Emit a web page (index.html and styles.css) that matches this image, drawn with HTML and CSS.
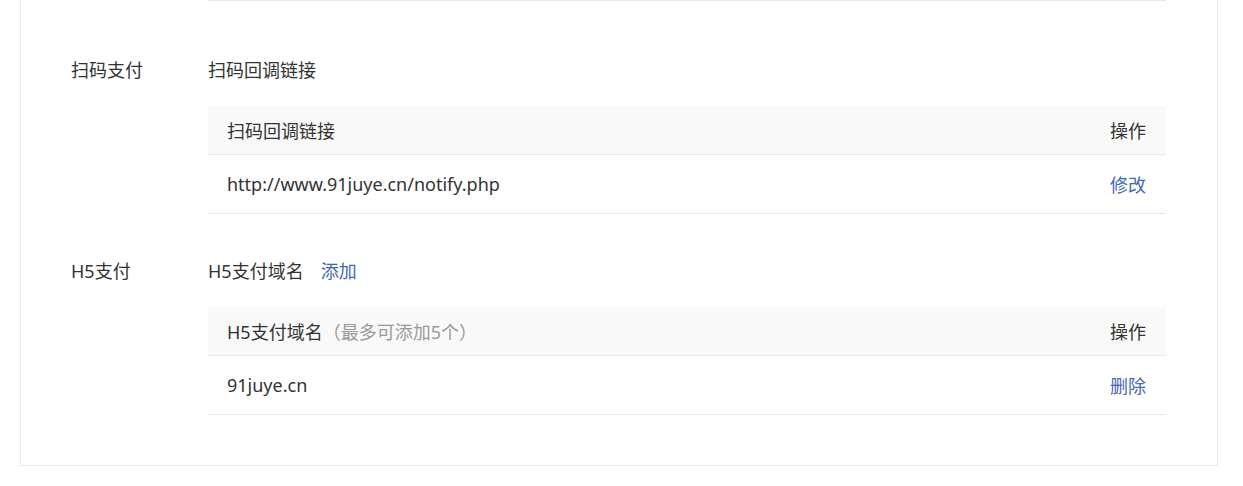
FILE: index.html
```html
<!DOCTYPE html>
<html lang="zh-CN">
<head>
<meta charset="utf-8">
<title>支付配置</title>
<link rel="stylesheet" href="styles.css">
</head>
<body>
<div class="card">
  <div class="prev-tail"></div>

  <div class="section section-first">
    <div class="label">扫码支付</div>
    <div class="content">
      <div class="title">扫码回调链接</div>
      <div class="table">
        <div class="tr th">
          <div class="cell main">扫码回调链接</div>
          <div class="cell op">操作</div>
        </div>
        <div class="tr td">
          <div class="cell main">http://www.91juye.cn/notify.php</div>
          <div class="cell op"><a class="link">修改</a></div>
        </div>
      </div>
    </div>
  </div>

  <div class="section">
    <div class="label">H5支付</div>
    <div class="content">
      <div class="title">H5支付域名<a class="link add">添加</a></div>
      <div class="table">
        <div class="tr th">
          <div class="cell main">H5支付域名<span class="hint">（最多可添加5个）</span></div>
          <div class="cell op">操作</div>
        </div>
        <div class="tr td">
          <div class="cell main">91juye.cn</div>
          <div class="cell op"><a class="link">删除</a></div>
        </div>
      </div>
    </div>
  </div>
</div>
</body>
</html>
```

FILE: styles.css
```css
html, body {
  margin: 0;
  padding: 0;
  background: #ffffff;
}
body {
  font-family: "Noto Sans", "Noto Sans CJK SC", sans-serif;
  font-size: 18px;
  color: #333333;
}
.card {
  margin-left: 20px;
  width: 1196px;
  border: 1px solid #e8e8e8;
  border-top: 0;
  padding-bottom: 50px;
}
.prev-tail {
  margin-left: 187px;
  width: 958px;
  height: 1px;
  background: #e8e8e8;
}
.section {
  display: flex;
  margin-top: 45px;
}
.section-first {
  margin-top: 57px;
}
.label {
  width: 137px;
  padding-left: 50px;
  line-height: 24px;
}
.content {
  width: 958px;
}
.title {
  line-height: 24px;
  display: flex;
}
.link {
  color: #3f68b5;
  cursor: pointer;
}
.add {
  margin-left: 17px;
}
.table {
  margin-top: 24px;
}
.tr {
  display: flex;
  justify-content: space-between;
  align-items: center;
  padding: 0 20px 0 19px;
  border-bottom: 1px solid #e8e8e8;
}
.th {
  background: #f9f9f9;
  height: 48px;
}
.td {
  height: 58px;
}
.hint {
  color: #999999;
}
.op {
  text-align: right;
}
```
